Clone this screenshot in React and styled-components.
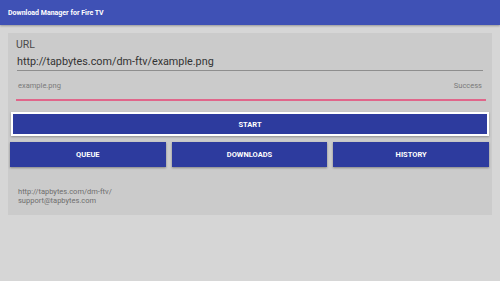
import React from 'react'
import styled, { createGlobalStyle } from 'styled-components';

const Global = createGlobalStyle`
    html, body { margin: 0; padding: 0; }
    body {
        width: 500px;
        height: 281px;
        overflow: hidden;
        background: #d6d6d6;
        font-family: Roboto, "Liberation Sans", sans-serif;
    }
`;

const App = () => {
  return (
    <>
      <Global />
      <Page>
        <Header>Download Manager for Fire TV</Header>
        <Panel>
            <Label>URL</Label>
            <UrlField>http://tapbytes.com/dm-ftv/example.png</UrlField>
            <StatusRow>
                <span>example.png</span>
                <span>Success</span>
            </StatusRow>
            <StartButton>START</StartButton>
            <ButtonRow>
                <Button>QUEUE</Button>
                <Button>DOWNLOADS</Button>
                <Button>HISTORY</Button>
            </ButtonRow>
            <Footer>
                <p>http://tapbytes.com/dm-ftv/</p>
                <p>support@tapbytes.com</p>
            </Footer>
        </Panel>
      </Page>
    </>
  )
}

export default App

const Page = styled.div`
    display: flex;
    flex-direction: column;
    height: 281px;
`;

const Header = styled.div`
    height: 25px;
    background: #3f51b5;
    color: #fff;
    font-size: 7px;
    font-weight: bold;
    display: flex;
    align-items: center;
    padding-left: 8px;
    box-shadow: 0 1px 2px rgba(0,0,0,.3);
`;

const Panel = styled.div`
    margin: 8px 8px 0 8px;
    background: #cbcbcb;
    padding: 6px 3px 10px 3px;
    display: flex;
    flex-direction: column;
`;

const Label = styled.div`
    font-size: 10.5px;
    color: #4a4a4a;
    padding-left: 5px;
    line-height: 12px;
`;

const UrlField = styled.div`
    margin: 4px 6px 0 6px;
    font-size: 10.8px;
    color: #333;
    padding: 0 0 2px 0;
    line-height: 13px;
    border-bottom: 1px solid #8e8e8e;
`;

const StatusRow = styled.div`
    display: flex;
    justify-content: space-between;
    margin: 0 3px 0 5px;
    padding: 10px 4px 0 2px;
    height: 18px;
    font-size: 7.5px;
    color: #7a7a7a;
    border-bottom: 2px solid #e0668a;
`;

const StartButton = styled.div`
    margin: 11px 0 0 0;
    height: 20px;
    border: 2px solid #fff;
    background: #2d3b9e;
    color: #fff;
    font-size: 7.5px;
    font-weight: bold;
    display: flex;
    align-items: center;
    justify-content: center;
    box-shadow: 0 1px 2px rgba(0,0,0,.3);
`;

const ButtonRow = styled.div`
    display: grid;
    grid-template-columns: repeat(3, 1fr);
    gap: 6px;
    margin: 6px 0 0 -1px;
`;

const Button = styled.div`
    height: 25px;
    background: #2d3b9e;
    color: #fff;
    font-size: 7.5px;
    font-weight: bold;
    display: flex;
    align-items: center;
    justify-content: center;
    box-shadow: 0 1px 2px rgba(0,0,0,.35);
`;

const Footer = styled.div`
    margin-top: 20px;
    padding-left: 7px;
    font-size: 7.5px;
    color: #6e6e6e;
    p{
        margin: 0;
        line-height: 9px;
    }
`;
